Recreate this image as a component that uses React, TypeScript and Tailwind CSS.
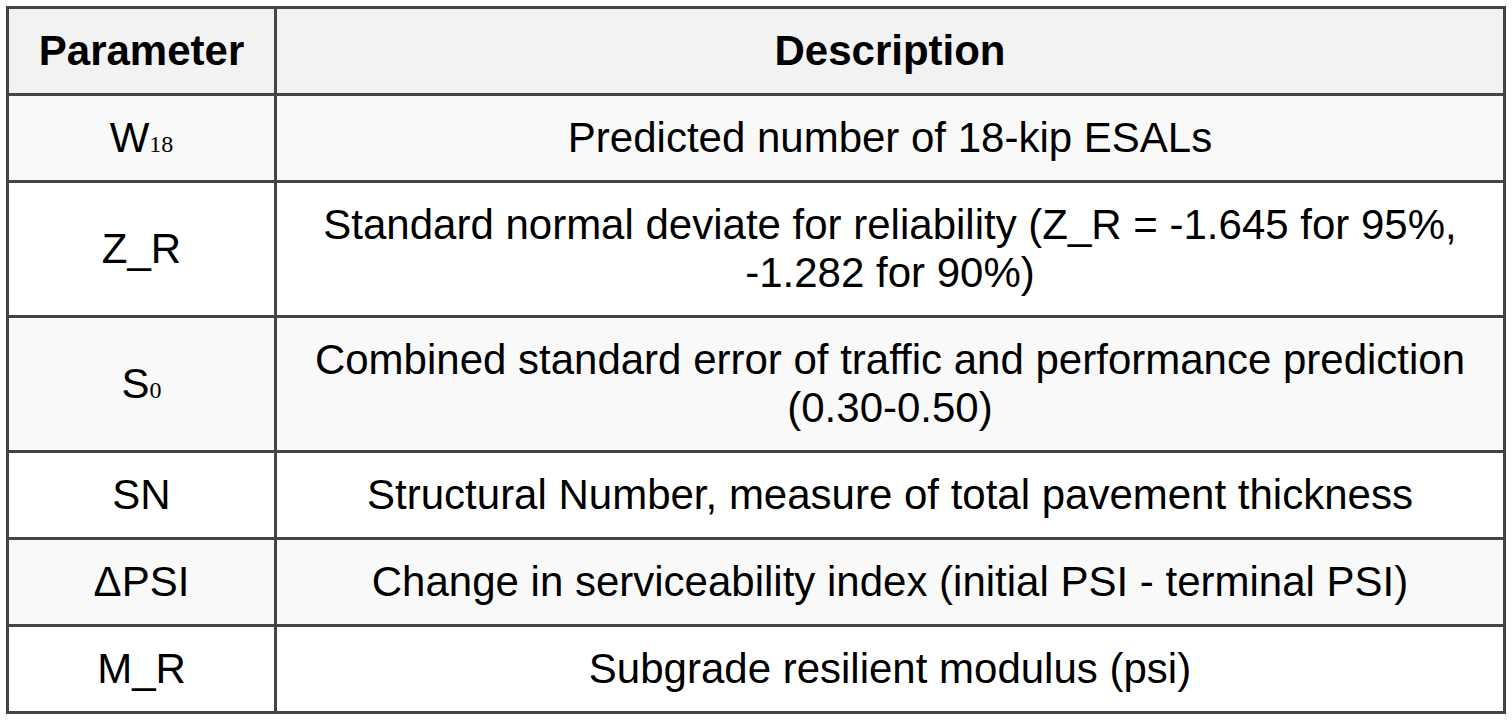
import React from "react";

type Row = { param: React.ReactNode; desc: string; bg: string };

const Sub = ({ children }: { children: React.ReactNode }) => (
  <span className="text-[24px] leading-none [font-family:'Liberation_Serif','Times_New_Roman',serif]">{children}</span>
);

const rows: Row[] = [
  { param: <>W<Sub>18</Sub></>, desc: "Predicted number of 18-kip ESALs", bg: "bg-[#f9f9f9]" },
  { param: "Z_R", desc: "Standard normal deviate for reliability (Z_R = -1.645 for 95%, -1.282 for 90%)", bg: "bg-white" },
  { param: <>S<Sub>0</Sub></>, desc: "Combined standard error of traffic and performance prediction (0.30-0.50)", bg: "bg-[#f9f9f9]" },
  { param: "SN", desc: "Structural Number, measure of total pavement thickness", bg: "bg-white" },
  { param: "ΔPSI", desc: "Change in serviceability index (initial PSI - terminal PSI)", bg: "bg-[#f9f9f9]" },
  { param: "M_R", desc: "Subgrade resilient modulus (psi)", bg: "bg-white" },
];

export default function App() {
  return (
    <div className="min-h-screen bg-white p-[6px] text-black [font-family:'Liberation_Sans',Arial,sans-serif]">
      <table className="w-[1500px] border-collapse text-[42px] leading-[48px]">
        <thead>
          <tr className="bg-[#f2f2f2]">
            <th className="w-[268px] border-[3px] border-[#444] px-[16px] py-[18px] text-center font-bold">Parameter</th>
            <th className="border-[3px] border-[#444] px-[16px] py-[18px] text-center font-bold">Description</th>
          </tr>
        </thead>
        <tbody>
          {rows.map((r, i) => (
            <tr key={i} className={r.bg}>
              <td className="border-[3px] border-[#444] px-[16px] py-[18px] text-center">{r.param}</td>
              <td className="border-[3px] border-[#444] px-[16px] py-[18px] text-center">{r.desc}</td>
            </tr>
          ))}
        </tbody>
      </table>
    </div>
  );
}
